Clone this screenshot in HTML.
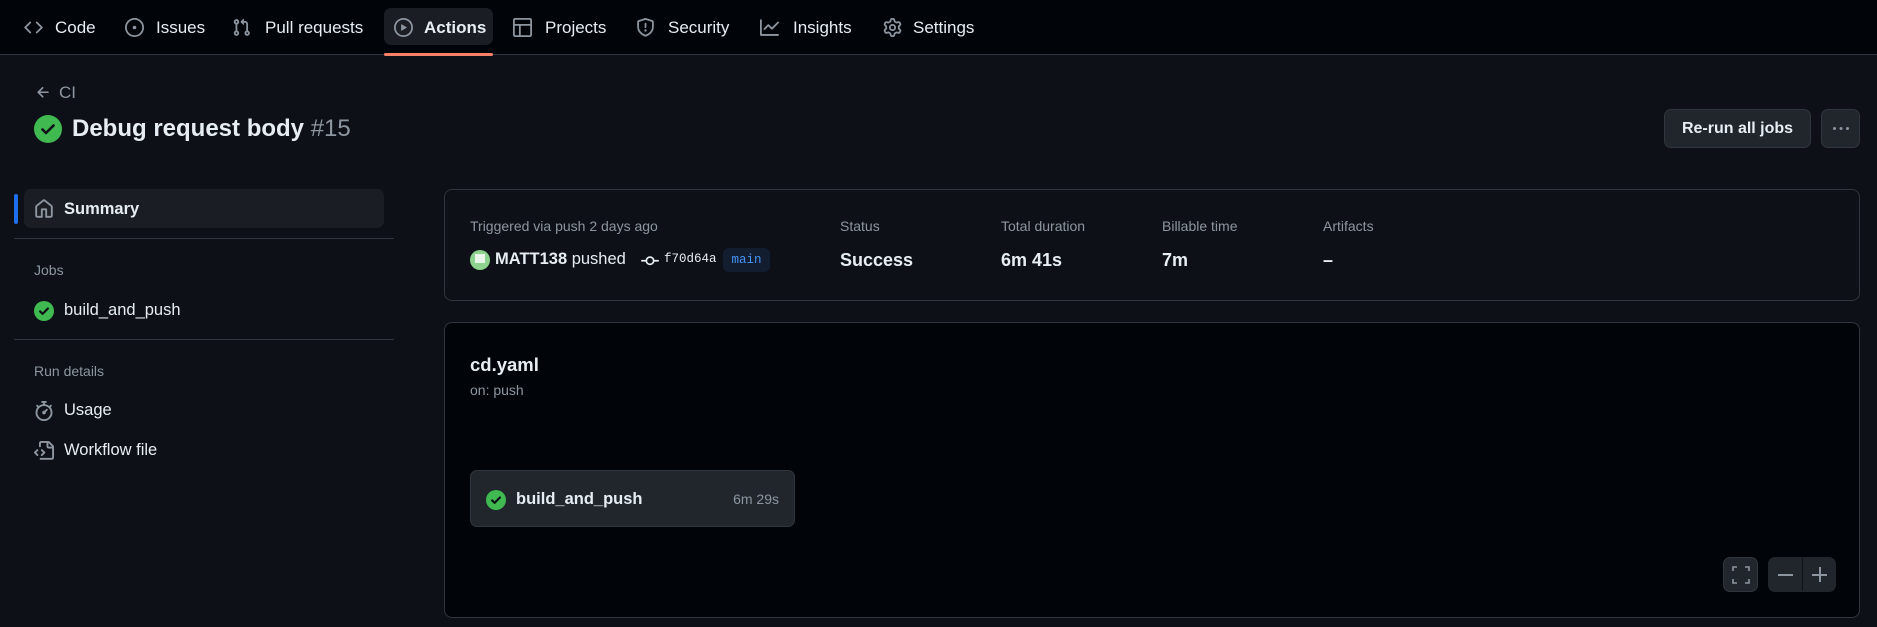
<!DOCTYPE html>
<html><head><meta charset="utf-8"><style>
*{margin:0;padding:0;box-sizing:border-box}
body{width:1877px;height:627px;background:#0d1117;color:#e6edf3;font-family:"Liberation Sans",sans-serif;position:relative;overflow:hidden}
.a{position:absolute;white-space:nowrap}
.nav{position:absolute;left:0;top:0;width:1877px;height:55px;background:#010409;border-bottom:1px solid #30363d}
.ni{position:absolute;top:0;height:55px;display:flex;align-items:center;font-size:17px;color:#e6edf3}
svg{display:block}
.muted{color:#8d96a0}
.card{position:absolute;border:1px solid #30363d;border-radius:8px}
.lbl{font-size:14px;color:#8d96a0;position:absolute;top:218px}
.val{font-size:18px;font-weight:bold;position:absolute;top:250px}
.btn{position:absolute;background:#21262d;border:1px solid #30363d;border-radius:7px}
</style></head><body>
<div class="nav">
 <svg class="a" style="left:24px;top:18px" width="19" height="19" viewBox="0 0 16 16" fill="#8d96a0"><path d="m11.28 3.22 4.25 4.25a.75.75 0 0 1 0 1.06l-4.25 4.25a.749.749 0 0 1-1.06-1.06L13.94 8l-3.72-3.72a.749.749 0 0 1 1.06-1.06Zm-6.56 0a.75.75 0 0 1 1.06 1.06L2.06 8l3.72 3.72a.749.749 0 0 1-1.06 1.06L.47 8.53a.75.75 0 0 1 0-1.06Z"/></svg>
 <div class="ni" style="left:55px">Code</div>
 <svg class="a" style="left:125px;top:18px" width="19" height="19" viewBox="0 0 16 16" fill="#8d96a0"><path d="M8 9.5a1.5 1.5 0 1 0 0-3 1.5 1.5 0 0 0 0 3Z"/><path d="M8 0a8 8 0 1 1 0 16A8 8 0 0 1 8 0ZM1.5 8a6.5 6.5 0 1 0 13 0 6.5 6.5 0 0 0-13 0Z"/></svg>
 <div class="ni" style="left:156px">Issues</div>
 <svg class="a" style="left:232px;top:18px" width="19" height="19" viewBox="0 0 16 16" fill="#8d96a0"><path d="M1.5 3.25a2.25 2.25 0 1 1 3 2.122v5.256a2.251 2.251 0 1 1-1.5 0V5.372A2.25 2.25 0 0 1 1.5 3.25Zm5.677-.177L9.573.677A.25.25 0 0 1 10 .854V2.5h1A2.5 2.5 0 0 1 13.5 5v5.628a2.251 2.251 0 1 1-1.5 0V5a1 1 0 0 0-1-1h-1v1.646a.25.25 0 0 1-.427.177L7.177 3.427a.25.25 0 0 1 0-.354ZM3.75 2.5a.75.75 0 1 0 0 1.5.75.75 0 0 0 0-1.5Zm0 9.5a.75.75 0 1 0 0 1.5.75.75 0 0 0 0-1.5Zm8.25.75a.75.75 0 1 0 1.5 0 .75.75 0 0 0-1.5 0Z"/></svg>
 <div class="ni" style="left:265px">Pull requests</div>
 <div class="a" style="left:384px;top:8px;width:109px;height:37px;background:#1a1e24;border-radius:7px"></div>
 <svg class="a" style="left:394px;top:18px" width="19" height="19" viewBox="0 0 16 16" fill="#8d96a0"><path d="M8 0a8 8 0 1 1 0 16A8 8 0 0 1 8 0ZM1.5 8a6.5 6.5 0 1 0 13 0 6.5 6.5 0 0 0-13 0Zm4.879-2.773 4.264 2.559a.25.25 0 0 1 0 .428l-4.264 2.559A.25.25 0 0 1 6 10.559V5.442a.25.25 0 0 1 .379-.215Z"/></svg>
 <div class="ni" style="left:424px;font-weight:bold">Actions</div>
 <div class="a" style="left:384px;top:53px;width:109px;height:3px;background:#f78166;border-radius:2px"></div>
 <svg class="a" style="left:513px;top:18px" width="19" height="19" viewBox="0 0 16 16" fill="#8d96a0"><path d="M1.75 0h12.5C15.216 0 16 .784 16 1.75v12.5A1.75 1.75 0 0 1 14.25 16H1.75A1.75 1.75 0 0 1 0 14.25V1.75C0 .784.784 0 1.75 0ZM1.5 1.75v12.5c0 .138.112.25.25.25H5V6.5H1.5V1.75Zm5 12.75h7.75a.25.25 0 0 0 .25-.25V6.5H6.5Zm-5-9.5H14.5V1.75a.25.25 0 0 0-.25-.25H1.75a.25.25 0 0 0-.25.25Z"/></svg>
 <div class="ni" style="left:545px">Projects</div>
 <svg class="a" style="left:636px;top:18px" width="19" height="19" viewBox="0 0 16 16" fill="#8d96a0"><path d="M7.467.133a1.748 1.748 0 0 1 1.066 0l5.25 1.68A1.75 1.75 0 0 1 15 3.48V7c0 1.566-.32 3.182-1.303 4.682-.983 1.498-2.585 2.813-5.032 3.855a1.697 1.697 0 0 1-1.33 0c-2.447-1.042-4.049-2.357-5.032-3.855C1.32 10.182 1 8.566 1 7V3.48a1.755 1.755 0 0 1 1.217-1.667Zm.61 1.429a.25.25 0 0 0-.153 0l-5.25 1.68a.25.25 0 0 0-.174.238V7c0 1.358.275 2.666 1.057 3.86.784 1.194 2.121 2.340 4.366 3.297a.196.196 0 0 0 .154 0c2.245-.956 3.582-2.104 4.366-3.298C13.225 9.666 13.5 8.36 13.5 7V3.48a.251.251 0 0 0-.174-.237l-5.25-1.68ZM8.75 4.75v3a.75.75 0 0 1-1.5 0v-3a.75.75 0 0 1 1.5 0ZM9 10.5a1 1 0 1 1-2 0 1 1 0 0 1 2 0Z"/></svg>
 <div class="ni" style="left:668px">Security</div>
 <svg class="a" style="left:760px;top:18px" width="19" height="19" viewBox="0 0 16 16" fill="#8d96a0"><path d="M1.5 1.75V13.5h13.75a.75.75 0 0 1 0 1.5H.75a.75.75 0 0 1-.75-.75V1.75a.75.75 0 0 1 1.5 0Zm14.28 2.53-5.25 5.250a.75.75 0 0 1-1.06 0L7 7.06 4.28 9.78a.751.751 0 0 1-1.060-1.06l3.25-3.25a.75.75 0 0 1 1.06 0L10 7.94l4.72-4.72a.751.751 0 0 1 1.06 1.06Z"/></svg>
 <div class="ni" style="left:793px">Insights</div>
 <svg class="a" style="left:883px;top:18px" width="19" height="19" viewBox="0 0 16 16" fill="#8d96a0"><path d="M8 0a8.2 8.2 0 0 1 .701.031C9.444.095 9.99.645 10.16 1.29l.288 1.107c.018.066.079.158.212.224.231.114.454.243.668.386.123.082.233.09.299.071l1.103-.303c.644-.176 1.392.021 1.82.63.27.385.506.792.704 1.218.315.675.111 1.422-.364 1.891l-.814.806c-.049.048-.098.147-.088.294.016.257.016.515 0 .772-.01.147.038.246.088.294l.814.806c.475.469.679 1.216.364 1.891a7.977 7.977 0 0 1-.704 1.217c-.428.61-1.176.807-1.82.63l-1.102-.302c-.067-.019-.177-.011-.3.071a5.909 5.909 0 0 1-.668.386c-.133.066-.194.158-.211.224l-.29 1.106c-.168.646-.715 1.196-1.458 1.26a8.006 8.006 0 0 1-1.402 0c-.743-.064-1.289-.614-1.458-1.26l-.289-1.106c-.018-.066-.079-.158-.212-.224a5.738 5.738 0 0 1-.668-.386c-.123-.082-.233-.09-.299-.071l-1.103.303c-.644.176-1.392-.021-1.82-.63a8.12 8.12 0 0 1-.704-1.218c-.315-.675-.111-1.422.363-1.891l.815-.806c.05-.048.098-.147.088-.294a6.214 6.214 0 0 1 0-.772c.01-.147-.038-.246-.088-.294l-.815-.806C.635 6.045.431 5.298.746 4.623a7.920 7.920 0 0 1 .704-1.217c.428-.61 1.176-.807 1.82-.63l1.102.302c.067.019.177.011.3-.071.214-.143.437-.272.668-.386.133-.066.194-.158.211-.224l.29-1.106C6.009.645 6.556.095 7.299.03 7.530.01 7.764 0 8 0Zm-.571 1.525c-.036.003-.108.036-.137.146l-.289 1.105c-.147.561-.549.967-.998 1.189-.173.086-.34.183-.5.290-.417.278-.97.423-1.529.27l-1.103-.303c-.109-.03-.175.016-.195.045-.22.312-.412.644-.573.99-.014.031-.021.11.059.19l.815.806c.411.406.562.957.53 1.456a4.709 4.709 0 0 0 0 .582c.032.499-.119 1.05-.53 1.456l-.815.806c-.081.08-.073.159-.059.19.162.346.353.677.573.989.02.03.085.076.195.046l1.102-.303c.56-.153 1.113-.008 1.53.27.161.107.328.204.501.29.447.222.85.629.997 1.189l.289 1.105c.029.109.101.143.137.146a6.6 6.6 0 0 0 1.142 0c.036-.003.108-.036.137-.146l.289-1.105c.147-.561.549-.967.998-1.189.173-.086.34-.183.5-.29.417-.278.97-.423 1.529-.27l1.103.303c.109.029.175-.016.195-.045.22-.313.411-.644.573-.99.014-.031.021-.11-.059-.19l-.815-.806c-.411-.406-.562-.957-.53-1.456a4.709 4.709 0 0 0 0-.582c-.032-.499.119-1.05.53-1.456l.815-.806c.081-.08.073-.159.059-.19a6.464 6.464 0 0 0-.573-.989c-.02-.03-.085-.076-.195-.046l-1.102.303c-.56.153-1.113.008-1.53-.27a4.440 4.440 0 0 0-.501-.29c-.447-.222-.85-.629-.997-1.189l-.289-1.105c-.029-.11-.101-.143-.137-.146a6.6 6.6 0 0 0-1.142 0ZM11 8a3 3 0 1 1-6 0 3 3 0 0 1 6 0ZM9.5 8a1.5 1.5 0 1 0-3.001.001A1.5 1.5 0 0 0 9.5 8Z"/></svg>
 <div class="ni" style="left:913px">Settings</div>
</div>

<svg class="a" style="left:35px;top:84px" width="17" height="17" viewBox="0 0 16 16" fill="#8d96a0"><path d="M7.78 12.53a.75.75 0 0 1-1.06 0L2.47 8.28a.75.75 0 0 1 0-1.06l4.25-4.25a.751.751 0 0 1 1.06 1.06L4.81 7h7.44a.75.75 0 0 1 0 1.5H4.81l2.97 2.97a.75.75 0 0 1 0 1.06Z"/></svg>
<div class="a muted" style="left:59px;top:83px;font-size:17px">CI</div>
<svg class="a" style="left:34px;top:115px" width="28" height="28" viewBox="0 0 28 28"><circle cx="14" cy="14" r="14" fill="#3fb950"/><path d="M8.5 14.5l3.5 3.5 7.5-7.5" stroke="#0d1117" stroke-width="2.6" fill="none" stroke-linecap="round" stroke-linejoin="round"/></svg>
<div class="a" style="left:72px;top:115px;font-size:24px;font-weight:bold">Debug request body <span style="font-weight:normal;color:#8d96a0">#15</span></div>

<div class="btn" style="left:1664px;top:109px;width:147px;height:39px;font-size:16px;font-weight:bold;text-align:center;line-height:37px">Re-run all jobs</div>
<div class="btn" style="left:1821px;top:109px;width:39px;height:39px"><svg style="margin:11px 0 0 9px" width="20" height="16" viewBox="0 0 16 16" fill="#8d96a0"><path d="M8 9a1.5 1.5 0 1 0 0-3 1.5 1.5 0 0 0 0 3ZM1.5 9a1.5 1.5 0 1 0 0-3 1.5 1.5 0 0 0 0 3Zm13 0a1.5 1.5 0 1 0 0-3 1.5 1.5 0 0 0 0 3Z"/></svg></div>

<!-- sidebar -->
<div class="a" style="left:14px;top:194px;width:4px;height:30px;background:#1f6feb;border-radius:2px"></div>
<div class="a" style="left:24px;top:189px;width:360px;height:39px;background:#1a1e24;border-radius:7px"></div>
<svg class="a" style="left:34px;top:199px" width="20" height="20" viewBox="0 0 16 16" fill="#8d96a0"><path d="M6.906.664a1.749 1.749 0 0 1 2.187 0l5.25 4.2c.415.332.657.835.657 1.367v7.019A1.75 1.75 0 0 1 13.25 15h-3.5a.75.75 0 0 1-.75-.75V9H7v5.25a.75.75 0 0 1-.75.75h-3.5A1.75 1.75 0 0 1 1 13.25V6.23c0-.531.242-1.034.657-1.366l5.25-4.2Zm1.25 1.171a.25.25 0 0 0-.312 0l-5.25 4.2a.25.25 0 0 0-.094.196v7.019c0 .138.112.25.25.25H5.5V8.25a.75.75 0 0 1 .75-.75h3.5a.75.75 0 0 1 .75.75v5.25h2.75a.25.25 0 0 0 .25-.25V6.23a.25.25 0 0 0-.094-.195Z"/></svg>
<div class="a" style="left:64px;top:200px;font-size:16.5px;font-weight:bold">Summary</div>
<div class="a" style="left:14px;top:238px;width:380px;height:1px;background:#30363d"></div>
<div class="a muted" style="left:34px;top:262px;font-size:14px">Jobs</div>
<svg class="a" style="left:34px;top:301px" width="20" height="20" viewBox="0 0 28 28"><circle cx="14" cy="14" r="14" fill="#3fb950"/><path d="M8.5 14.5l3.5 3.5 7.5-7.5" stroke="#0d1117" stroke-width="3" fill="none" stroke-linecap="round" stroke-linejoin="round"/></svg>
<div class="a" style="left:64px;top:301px;font-size:16.5px">build_and_push</div>
<div class="a" style="left:14px;top:339px;width:380px;height:1px;background:#30363d"></div>
<div class="a muted" style="left:34px;top:363px;font-size:14px">Run details</div>
<svg class="a" style="left:34px;top:401px" width="20" height="20" viewBox="0 0 16 16" fill="#8d96a0"><path d="M5.75.75A.75.75 0 0 1 6.5 0h3a.75.75 0 0 1 0 1.5h-.75v1l-.001.041a6.724 6.724 0 0 1 3.464 1.435l.007-.006.75-.75a.749.749 0 0 1 1.275.326.749.749 0 0 1-.215.734l-.75.75-.006.007a6.75 6.75 0 1 1-10.548 0L2.72 5.03l-.75-.75a.751.751 0 0 1 .018-1.042.751.751 0 0 1 1.042-.018l.75.75.007.006A6.72 6.72 0 0 1 7.25 2.541V1.5H6.5a.75.75 0 0 1-.75-.75ZM8 14.5a5.25 5.25 0 1 0-.001-10.501A5.25 5.25 0 0 0 8 14.5Zm.389-6.7 1.33-1.33a.75.75 0 1 1 1.061 1.06L9.45 8.861A1.503 1.503 0 0 1 8 10.75a1.499 1.499 0 1 1 .389-2.95Z"/></svg>
<div class="a" style="left:64px;top:401px;font-size:16.5px">Usage</div>
<svg class="a" style="left:34px;top:441px" width="20" height="20" viewBox="0 0 16 16" fill="#8d96a0"><path d="M4 1.75C4 .784 4.784 0 5.75 0h5.586c.464 0 .909.184 1.237.513l2.914 2.914c.329.328.513.773.513 1.237v8.586A1.75 1.75 0 0 1 14.25 15h-9a.75.75 0 0 1 0-1.5h9a.25.25 0 0 0 .25-.25V6h-2.75A1.75 1.75 0 0 1 10 4.250V1.5H5.75a.25.25 0 0 0-.25.25v2.5a.75.75 0 0 1-1.5 0Zm7.5-.188V4.25c0 .138.112.25.25.25h2.688l-.011-.013-2.914-2.914-.013-.011ZM5.72 6.72a.75.75 0 0 0 0 1.06l1.47 1.47-1.47 1.47a.75.75 0 1 0 1.06 1.06l2-2a.75.75 0 0 0 0-1.06l-2-2a.75.75 0 0 0-1.06 0ZM3.28 7.78a.75.75 0 0 0-1.06-1.06l-2 2a.75.75 0 0 0 0 1.06l2 2a.75.75 0 0 0 1.06-1.06L1.81 9.25l1.47-1.47Z"/></svg>
<div class="a" style="left:64px;top:441px;font-size:16.5px">Workflow file</div>

<!-- summary card -->
<div class="card" style="left:444px;top:189px;width:1416px;height:112px"></div>
<div class="lbl" style="left:470px">Triggered via push 2 days ago</div>
<div class="a" style="left:470px;top:250px;width:20px;height:20px;border-radius:50%;background:#8fd18f"><div style="position:absolute;left:5px;top:4px;width:10px;height:9px;background:#e8f5e8"></div></div>
<div class="a" style="left:495px;top:250px;font-size:16.5px"><b>MATT138</b> pushed</div>
<svg class="a" style="left:641px;top:252px" width="18" height="18" viewBox="0 0 16 16" fill="#e6edf3"><path d="M11.93 8.5a4.002 4.002 0 0 1-7.860 0H.75a.75.75 0 0 1 0-1.5h3.32a4.002 4.002 0 0 1 7.86 0h3.32a.75.75 0 0 1 0 1.5Zm-1.43-.75a2.5 2.5 0 1 0-5 0 2.5 2.5 0 0 0 5 0Z"/></svg>
<div class="a" style="left:664px;top:252px;font-size:12.5px;font-family:'Liberation Mono',monospace">f70d64a</div>
<div class="a" style="left:723px;top:248px;width:47px;height:24px;background:#121d2f;border-radius:6px;color:#4493f8;font-family:'Liberation Mono',monospace;font-size:12.5px;text-align:center;line-height:24px">main</div>
<div class="lbl" style="left:840px">Status</div><div class="val" style="left:840px">Success</div>
<div class="lbl" style="left:1001px">Total duration</div><div class="val" style="left:1001px">6m 41s</div>
<div class="lbl" style="left:1162px">Billable time</div><div class="val" style="left:1162px">7m</div>
<div class="lbl" style="left:1323px">Artifacts</div><div class="val" style="left:1323px">–</div>

<!-- graph card -->
<div class="card" style="left:444px;top:322px;width:1416px;height:296px;background:#010409"></div>
<div class="a" style="left:470px;top:354px;font-size:18.5px;font-weight:bold">cd.yaml</div>
<div class="a muted" style="left:470px;top:382px;font-size:14px">on: push</div>
<div class="a" style="left:470px;top:470px;width:325px;height:57px;background:#21262d;border:1px solid #30363d;border-radius:7px"></div>
<svg class="a" style="left:486px;top:490px" width="20" height="20" viewBox="0 0 28 28"><circle cx="14" cy="14" r="14" fill="#3fb950"/><path d="M8.5 14.5l3.5 3.5 7.5-7.5" stroke="#0d1117" stroke-width="3" fill="none" stroke-linecap="round" stroke-linejoin="round"/></svg>
<div class="a" style="left:516px;top:490px;font-size:16.5px;font-weight:bold">build_and_push</div>
<div class="a muted" style="left:700px;top:491px;width:79px;text-align:right;font-size:14px">6m 29s</div>
<div class="btn" style="left:1723px;top:557px;width:35px;height:35px"><svg style="margin:8px 0 0 8px" width="18" height="18" viewBox="0 0 18 18" fill="none" stroke="#8d96a0" stroke-width="1.6"><path d="M1 5V1h4M13 1h4v4M17 13v4h-4M5 17H1v-4"/></svg></div>
<div class="btn" style="left:1768px;top:557px;width:68px;height:35px;border-color:#21262d"><div style="position:absolute;left:33px;top:0;width:1px;height:33px;background:#0d1117"></div><div style="position:absolute;left:9px;top:16px;width:15px;height:1.6px;background:#8d96a0"></div><div style="position:absolute;left:43px;top:16px;width:15px;height:1.6px;background:#8d96a0"></div><div style="position:absolute;left:50px;top:9px;width:1.6px;height:15px;background:#8d96a0"></div></div>
</body></html>
